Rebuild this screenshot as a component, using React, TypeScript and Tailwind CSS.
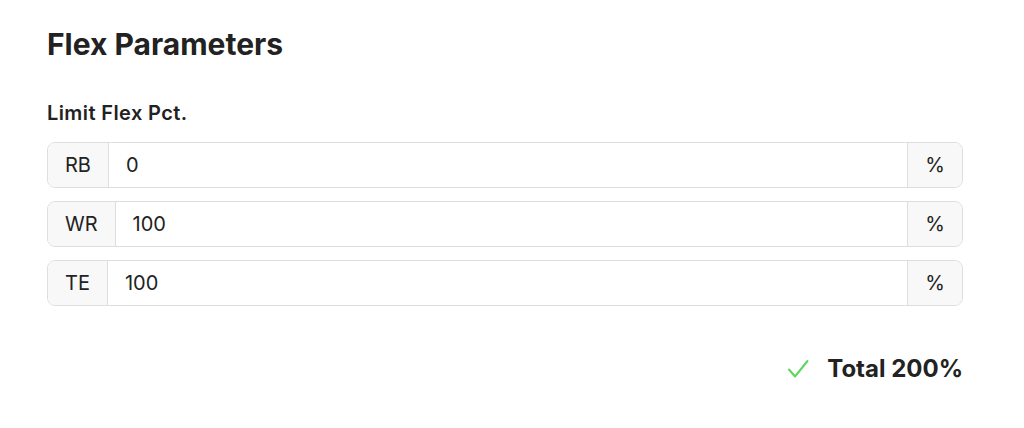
import React from 'react';

const rows = [
  { label: 'RB', value: '0' },
  { label: 'WR', value: '100' },
  { label: 'TE', value: '100' },
];

function PctInput({ label, value }: { label: string; value: string }) {
  return (
    <div className="flex h-[46px] items-stretch rounded-lg border border-[#dedede] overflow-hidden">
      <span className="flex items-center bg-[#f8f8f8] border-r border-[#dedede] px-[17px] text-xl text-[#222]">
        {label}
      </span>
      <input
        className="flex-1 min-w-0 bg-white px-[17px] text-xl text-[#222] outline-none"
        defaultValue={value}
      />
      <span className="flex w-[55px] items-center justify-center bg-[#f8f8f8] border-l border-[#dedede] text-xl text-[#222]">
        %
      </span>
    </div>
  );
}

export default function App() {
  return (
    <div className="min-h-screen bg-white pl-[47px] pr-[61px] pt-[26px] font-['Inter',sans-serif] text-[#222]">
      <h1 className="text-[30px] leading-9 font-bold">Flex Parameters</h1>
      <h3 className="mt-[37px] text-xl leading-7 font-semibold tracking-[0.02em]">Limit Flex Pct.</h3>
      <div className="mt-[15px] flex flex-col gap-[13px]">
        {rows.map((r) => (
          <PctInput key={r.label} label={r.label} value={r.value} />
        ))}
      </div>
      <div className="mt-[47px] flex items-center justify-end gap-[18px]">
        <svg width="22" height="20" viewBox="0 0 22 20" fill="none" stroke="#5cd65c" strokeWidth="2" strokeLinecap="round" strokeLinejoin="round">
          <path d="M2 10.5l6 7L20.5 2" />
        </svg>
        <span className="text-2xl leading-8 font-bold">Total 200%</span>
      </div>
    </div>
  );
}
